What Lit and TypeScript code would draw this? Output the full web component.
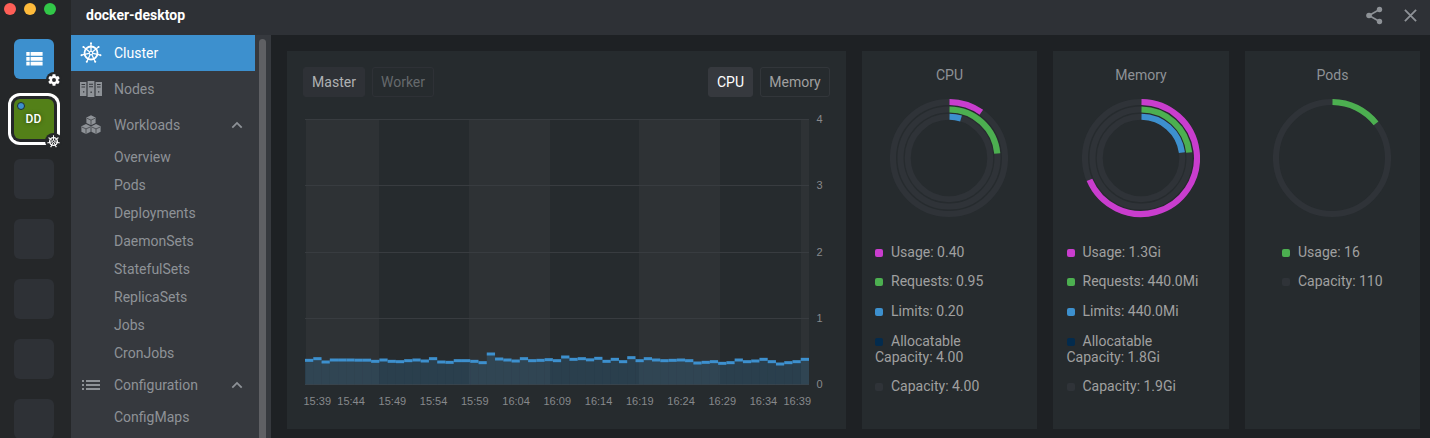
import { LitElement, html, css, svg, nothing } from "lit";
import { customElement, property } from "lit/decorators.js";

type Arc = { value: number; color: string };
type Legend = { label: string; color: string };

const PURPLE = "#c93dce";
const GREEN = "#4caf50";
const BLUE = "#3d90ce";
const NAVY = "#032b4d";
const TRACK = "#2f3338";

const polar = (r: number, turn: number): [number, number] => [
  r * Math.sin(turn * Math.PI * 2),
  -r * Math.cos(turn * Math.PI * 2),
];

const wheel = (size: number, weight = 1.7) => {
  const spokes = Array.from({ length: 7 }, (_, i) => i / 7);
  return html`<svg width=${size} height=${size} viewBox="-12 -12 24 24" fill="none" stroke="currentColor" stroke-width=${weight}>
    <circle r="7.1" stroke-width=${weight * 1.15}></circle>
    ${spokes.map((t) => {
      const a = polar(2.2, t);
      const b = polar(10.9, t);
      const [cx, cy] = polar(10.6, t);
      return svg`<line x1=${a[0]} y1=${a[1]} x2=${b[0]} y2=${b[1]} stroke-width=${weight * 0.8}></line>
        <circle cx=${cx} cy=${cy} r="1.1" fill="currentColor" stroke="none"></circle>`;
    })}
    <circle r="1.9" stroke-width="1.2"></circle>
  </svg>`;
};

const nodesIcon = html`<svg width="22" height="16" viewBox="0 0 22 16">
  <path fill="currentColor" d="M0 1h6.4v14H0zM7.6 0h6.8v16H7.6zM15.6 1H22v14h-6.4z"></path>
  <path fill="#36393e" d="M1.5 3h3.6v1H1.5zM1.5 5.4h3.6v1H1.5zM9 2.8h4v1H9zM9 5.2h4v1H9zM17 3h3.6v1H17zM17 5.4h3.6v1H17zM3 10.2h1.3v1.4H3zM10.5 10.5h1.3V12h-1.3zM18 10.2h1.3v1.4H18z"></path>
</svg>`;

const cube = (x: number, y: number) => svg`<g transform=${`translate(${x} ${y})`}>
  <path fill="currentColor" d="M0-5 4.6-2.8V2.7L0 5-4.6 2.7V-2.8z"></path>
  <path fill="none" stroke="#36393e" stroke-width=".7" d="M-4-2 0-.2 4-2M0-.2V4.6"></path>
</g>`;

const cubesIcon = html`<svg width="20" height="20" viewBox="0 0 20 20">
  ${cube(10, 5.3)}${cube(5, 14.1)}${cube(15, 14.1)}
</svg>`;

const listIcon = html`<svg width="18" height="10" viewBox="0 0 18 10">
  <path fill="currentColor" d="M0 0h2v2H0zM4 0h14v2H4zM0 4h2v2H0zM4 4h14v2H4zM0 8h2v2H0zM4 8h14v2H4z"></path>
</svg>`;

const catalogIcon = html`<svg width="17" height="14" viewBox="0 0 17 14">
  <path fill="#fff" d="M.3 0h3.4v3.8H.3zM4.6 0h12v3.8h-12zM.3 4.9h3.4v3.8H.3zM4.6 4.9h12v3.8h-12zM.3 9.8h3.4v3.8H.3zM4.6 9.8h12v3.8h-12z"></path>
</svg>`;

const gearIcon = html`<svg width="12" height="12" viewBox="2 2 20 20">
  <path fill="#fff" d="M19.14 12.94c.04-.3.06-.61.06-.94 0-.32-.02-.64-.07-.94l2.03-1.58c.18-.14.23-.41.12-.61l-1.92-3.32c-.12-.22-.37-.29-.59-.22l-2.39.96c-.5-.38-1.03-.7-1.62-.94l-.36-2.54c-.04-.24-.24-.41-.48-.41h-3.84c-.24 0-.43.17-.47.41l-.36 2.54c-.59.24-1.13.57-1.62.94l-2.39-.96c-.22-.08-.47 0-.59.22L2.74 8.87c-.12.21-.08.47.12.61l2.03 1.58c-.05.3-.09.63-.09.94s.02.64.07.94l-2.03 1.58c-.18.14-.23.41-.12.61l1.92 3.32c.12.22.37.29.59.22l2.39-.96c.5.38 1.03.7 1.62.94l.36 2.54c.05.24.24.41.48.41h3.84c.24 0 .44-.17.47-.41l.36-2.54c.59-.24 1.13-.56 1.62-.94l2.39.96c.22.08.47 0 .59-.22l1.92-3.32c.12-.22.07-.47-.12-.61l-2.01-1.58zM12 15.3a3.3 3.3 0 1 1 0-6.6 3.3 3.3 0 0 1 0 6.6z"></path>
</svg>`;

const chevron = html`<svg class="chevron" width="12" height="8" viewBox="0 0 12 8">
  <path fill="none" stroke="currentColor" stroke-width="1.8" d="M1.3 6.6 6 1.9l4.7 4.7"></path>
</svg>`;

const shareIcon = html`<svg width="24" height="24" viewBox="0 0 24 24">
  <path fill="none" stroke="currentColor" stroke-width="1.6" d="M17.5 6.5 7 12.5l10.5 6"></path>
  <g fill="currentColor"><circle cx="17.5" cy="6.5" r="2.7"></circle><circle cx="7" cy="12.5" r="2.8"></circle><circle cx="17.5" cy="18.5" r="2.7"></circle></g>
</svg>`;

const closeIcon = html`<svg width="24" height="24" viewBox="0 0 24 24">
  <path fill="none" stroke="currentColor" stroke-width="1.8" d="m6.9 6.9 11.2 11.2M18.1 6.9 6.9 18.1"></path>
</svg>`;

@customElement("cluster-rail")
export class ClusterRail extends LitElement {
  static styles = css`
    :host { display: flex; flex-direction: column; align-items: flex-start; width: 71px; box-sizing: border-box; background: #252729; overflow: hidden; }
    .lights { display: flex; gap: 8px; padding: 3px 0 0 4px; height: 12px; margin-bottom: 24px; flex: none; }
    .light { width: 12px; height: 12px; border-radius: 50%; }
    .red { background: #ff5f57; }
    .yellow { background: #ffbb3b; }
    .green { background: #32c748; }
    .items { display: flex; flex-direction: column; gap: 20px; padding-left: 14px; }
    .tile { position: relative; width: 40px; height: 40px; flex: none; box-sizing: border-box; display: flex; align-items: center; justify-content: center; border-radius: 6px; background: #2e3136; }
    .catalog { background: #3d90ce; }
    .active { padding-right: 1px; background: #538018; color: #fff; font: 500 12px Roboto, sans-serif; letter-spacing: .2px; text-shadow: 0 0 4px rgba(0,0,0,.5); box-shadow: 0 0 0 3px #252729, 0 0 0 6px #fff; }
    .badge { position: absolute; left: 32px; top: 33px; width: 16px; height: 16px; border-radius: 50%; background: #252729; display: flex; align-items: center; justify-content: center; color: #fff; }
    .active .badge { left: 31px; top: 34px; width: 17px; }
    .status { position: absolute; left: 3px; top: 3px; width: 6px; height: 6px; border: 1px solid #1d2b35; border-radius: 50%; background: #3d90ce; }
  `;
  render() {
    return html`
      <div class="lights"><i class="light red"></i><i class="light yellow"></i><i class="light green"></i></div>
      <div class="items">
        <div class="tile catalog">${catalogIcon}<span class="badge">${gearIcon}</span></div>
        <div class="tile active">DD<span class="status"></span><span class="badge">${wheel(13, 2.2)}</span></div>
        ${[0, 1, 2, 3, 4].map(() => html`<div class="tile"></div>`)}
      </div>`;
  }
}

@customElement("cluster-nav")
export class ClusterNav extends LitElement {
  static styles = css`
    :host { display: flex; width: 200px; background: #36393e; overflow: hidden; color: #8e9297; font: 14px/16px Roboto, sans-serif; }
    .list { width: 184px; }
    .row { display: flex; align-items: center; height: 36px; }
    .row.selected { background: #3d90ce; color: #fff; }
    .icon { width: 24px; margin: 0 11px 0 8px; display: flex; justify-content: center; }
    .name { flex: 1; }
    .chevron { margin-right: 12px; }
    .sub { height: 28px; line-height: 28px; padding-left: 43px; }
    .scroll { width: 7px; margin: 4px 0 0 4px; border-radius: 4px 4px 0 0; background: #5f6064; }
  `;
  private row(name: string, icon: unknown, open = false, selected = false) {
    return html`<div class="row ${selected ? "selected" : ""}"><span class="icon">${icon}</span><span class="name">${name}</span>${open ? chevron : nothing}</div>`;
  }
  render() {
    const workloads = ["Overview", "Pods", "Deployments", "DaemonSets", "StatefulSets", "ReplicaSets", "Jobs", "CronJobs"];
    return html`
      <div class="list">
        ${this.row("Cluster", wheel(22), false, true)}
        ${this.row("Nodes", nodesIcon)}
        ${this.row("Workloads", cubesIcon, true)}
        ${workloads.map((w) => html`<div class="sub">${w}</div>`)}
        ${this.row("Configuration", listIcon, true)}
        <div class="sub">ConfigMaps</div>
      </div>
      <div class="scroll"></div>`;
  }
}

@customElement("usage-chart")
export class UsageChart extends LitElement {
  static styles = css`
    :host { display: block; background: #262b2e; padding: 16px; box-sizing: border-box; font: 14px/28px Roboto, sans-serif; }
    .bar { display: flex; gap: 7px; height: 30px; }
    .tab { box-sizing: border-box; height: 30px; border: 1px solid #32363a; border-radius: 3px; text-align: center; color: #a0a0a0; }
    .w62 { width: 62px; }
    .w45 { width: 45px; }
    .w70 { width: 70px; }
    .filled { background: #2e3136; border-color: #2e3136; color: #b0b1b3; }
    .dim { color: #65696c; border-color: #2e3136; }
    .on { background: #36393e; border-color: #36393e; color: #fff; }
    .space { flex: 1; }
    .plot { display: block; margin-top: 8px; }
    .tick { font: 11px "Liberation Sans", Arial, sans-serif; fill: #87898c; }
  `;
  // Top edge of each one-minute sample, in thirds of a pixel below y = 330.
  private samples = [
    91, 86, 96, 90, 90, 90, 90.5, 90.5, 94, 90, 94, 95, 92, 90, 93, 86, 96, 97, 92, 92, 94, 98, 72, 87, 90, 93, 86, 92, 91, 89, 92,
    81, 88, 86, 89.5, 85, 94, 88, 95, 83, 92, 86, 90, 92, 91, 90, 92, 99, 97, 95, 100, 98, 90, 95, 93, 88, 95, 102, 98, 95, 88,
  ];
  render() {
    const step = 504 / 61;
    const bands = [[306, 73], [469, 81], [639, 81], [801, 8]];
    const times: [string, number][] = [
      ["15:39", 303.5], ["15:44", 337.3], ["15:49", 378.6], ["15:54", 419.8], ["15:59", 461], ["16:04", 502.3], ["16:09", 543.5],
      ["16:14", 584.8], ["16:19", 626], ["16:24", 667.3], ["16:29", 708.5], ["16:34", 749.7], ["16:39", 783.5],
    ];
    return html`
      <div class="bar">
        <div class="tab filled w62">Master</div><div class="tab dim w62">Worker</div>
        <div class="space"></div>
        <div class="tab on w45">CPU</div><div class="tab w70">Memory</div>
      </div>
      <svg class="plot" width="527" height="308" viewBox="303 105 527 308">
        ${bands.map(([x, w]) => svg`<rect x=${x} y="119" width=${w} height="265" fill="#2e3235"></rect>`)}
        ${[119, 185, 252, 318, 384].map((y) => svg`<rect x="305" y=${y} width="504" height="1" fill="#383c40"></rect>`)}
        ${this.samples.map((s, i) => {
          const x = 305 + i * step;
          const y = 330 + s / 3;
          return svg`<rect x=${x} y=${y} width=${step} height=${384.5 - y} fill="#3d90ce" fill-opacity=".2"></rect>
            <rect x=${x} y=${y - 1.5} width=${step} height="3" fill="#3d90ce"></rect>`;
        })}
        ${[4, 3, 2, 1, 0].map((n, i) => svg`<text class="tick" x="816.5" y=${123 + i * 66.25}>${n}</text>`)}
        ${times.map(([t, x]) => svg`<text class="tick" x=${x} y="405">${t}</text>`)}
      </svg>`;
  }
}

@customElement("ring-card")
export class RingCard extends LitElement {
  @property() heading = "";
  @property({ attribute: false }) arcs: Arc[] = [];
  @property({ attribute: false }) legend: Legend[] = [];

  static styles = css`
    :host { display: flex; flex-direction: column; align-items: center; background: #262b2e; padding-top: 16px; box-sizing: border-box; font: 14px/16px Roboto, sans-serif; color: #a0a0a0; }
    .title { color: #8e9297; }
    .rings { display: block; align-self: flex-start; margin: 15px 0 25.65px calc(50% - 59.5px); }
    .legend { display: flex; flex-direction: column; gap: 13.65px; width: 149px; box-sizing: border-box; padding-right: 10px; }
    :host([narrow]) .legend { width: 101px; padding-right: 0; white-space: nowrap; }
    .swatch { display: inline-block; width: 8px; height: 8px; margin-right: 8px; border-radius: 2px; }
  `;
  render() {
    const radii = [56, 48.5, 41.3];
    return html`
      <div class="title">${this.heading}</div>
      <svg class="rings" width="118" height="120" viewBox="-59 -60 118 120">
        ${this.arcs.map((arc, i) => {
          const r = radii[i];
          const [sx, sy] = polar(r, 0.5 / (r * 2 * Math.PI));
          const [ex, ey] = polar(r, arc.value);
          return svg`<circle r=${r} fill="none" stroke=${TRACK} stroke-width="6.1"></circle>
            <path fill="none" stroke=${arc.color} stroke-width="6.1" d=${`M${sx} ${sy}A${r} ${r} 0 ${arc.value > 0.5 ? 1 : 0} 1 ${ex} ${ey}`}></path>`;
        })}
      </svg>
      <div class="legend">
        ${this.legend.map((l) => html`<div><span class="swatch" style="background:${l.color}"></span>${l.label}</div>`)}
      </div>`;
  }
}

@customElement("app-root")
export class AppRoot extends LitElement {
  static styles = css`
    :host { display: grid; grid-template-columns: 71px 1fr; height: 438px; overflow: hidden; background: #1e2124; font-family: Roboto, sans-serif; }
    .window { display: grid; grid-template-rows: 35px 1fr; min-width: 0; min-height: 0; }
    .header { display: flex; align-items: center; background: #2e3136; padding: 0 8px 5px 15px; box-sizing: border-box; }
    .title { flex: 1; color: #fff; font: 700 14px/16px Roboto, sans-serif; }
    .actions { display: flex; gap: 12px; color: #8e9297; }
    .actions svg { display: block; }
    .body { display: grid; grid-template-columns: 200px 1fr; min-height: 0; }
    .main { display: grid; grid-template-columns: 559px 175px 176px 175px; gap: 16px; padding: 16px 10px 9px 16px; }
  `;
  render() {
    const legend = (usage: string, req: string, lim: string, alloc: string, cap: string): Legend[] => [
      { label: `Usage: ${usage}`, color: PURPLE },
      { label: `Requests: ${req}`, color: GREEN },
      { label: `Limits: ${lim}`, color: BLUE },
      { label: `Allocatable Capacity: ${alloc}`, color: NAVY },
      { label: `Capacity: ${cap}`, color: TRACK },
    ];
    const arcs = (a: number, b: number, c: number): Arc[] => [
      { value: a, color: PURPLE }, { value: b, color: GREEN }, { value: c, color: BLUE },
    ];
    return html`
      <cluster-rail></cluster-rail>
      <div class="window">
        <div class="header"><div class="title">docker-desktop</div><div class="actions">${shareIcon}${closeIcon}</div></div>
        <div class="body">
          <cluster-nav></cluster-nav>
          <div class="main">
            <usage-chart></usage-chart>
            <ring-card heading="CPU" .arcs=${arcs(0.098, 0.235, 0.047)} .legend=${legend("0.40", "0.95", "0.20", "4.00", "4.00")}></ring-card>
            <ring-card heading="Memory" .arcs=${arcs(0.686, 0.232, 0.229)} .legend=${legend("1.3Gi", "440.0Mi", "440.0Mi", "1.8Gi", "1.9Gi")}></ring-card>
            <ring-card narrow heading="Pods" .arcs=${[{ value: 0.144, color: GREEN }]} .legend=${[{ label: "Usage: 16", color: GREEN }, { label: "Capacity: 110", color: TRACK }]}></ring-card>
          </div>
        </div>
      </div>`;
  }
}
